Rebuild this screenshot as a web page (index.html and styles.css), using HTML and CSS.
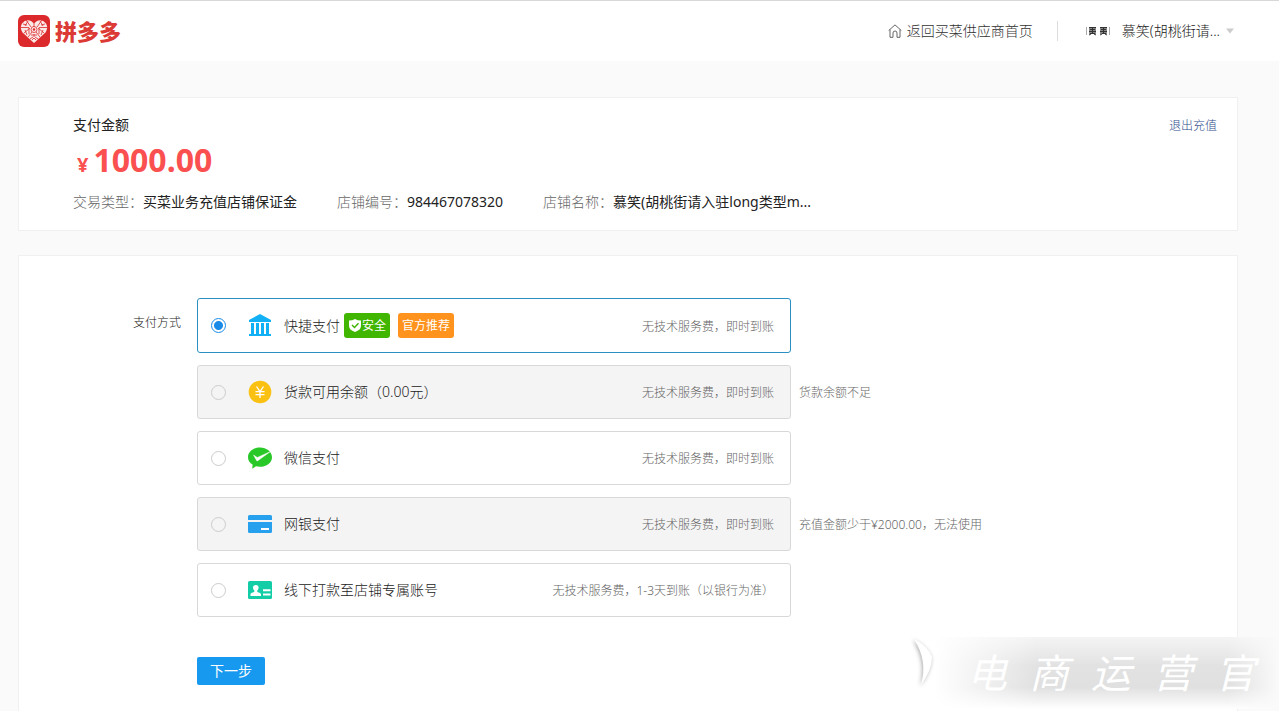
FILE: index.html
```html
<!DOCTYPE html>
<html lang="zh-CN">
<head>
<meta charset="utf-8">
<title>充值</title>
<link rel="stylesheet" href="styles.css">
</head>
<body>
<header class="topbar">
  <a class="brand" href="#">
    <svg class="brand-mark" viewBox="0 0 32 32" aria-hidden="true">
      <rect width="32" height="32" rx="6" fill="#dc2a2c"/>
      <path d="M16 28 4.500 17.500Q1.500 13 4 8.500 8 3.500 13 6L16 8.500 19 6Q24 3.500 28 8.500 30.500 13 27.500 17.500Z" fill="#fbe9e7"/>
      <g stroke="#dc2a2c" fill="none" stroke-width=".8">
        <path d="M3 12.500h8M21 12.500h8M6 18l6-5M26 18l-6-5M8 5l5 7M24 5l-5 7M10 22l4-5M22 22l-4-5M16 8v4M16 19v3M11 13v6M21 13v6"/>
        <path d="M5 9l4 1M27 9l-4 1M7 15l2 5M25 15l-2 5M12 24l3-2M20 24l-3-2M10 6l-3 5M22 6l3 5M13 20h6M14 25l2-2 2 2"/>
        <circle cx="16" cy="14.500" r="3"/>
      </g>
      <circle cx="16" cy="14.500" r="1.200" fill="#dc2a2c"/>
    </svg>
    <span class="brand-name">拼多多</span>
  </a>
  <nav class="topnav">
    <a class="home-link" href="#">
      <svg class="home-icon" viewBox="0 0 14 14" aria-hidden="true"><path d="M.7 6.500 7 .9l6.300 5.600M2 5.500v7.800h3V9a2 2 0 0 1 4 0v4.300h3V5.500" fill="none" stroke="#666"/></svg>
      返回买菜供应商首页
    </a>
    <button class="account" type="button">
      <svg class="avatar" viewBox="0 0 24 10" aria-hidden="true">
        <path d="M.5 1v8M23.500 1v8" stroke="#aaa"/>
        <g fill="#888"><path d="M3 1h7v7H3zM14 1h7v7h-7z"/></g>
        <g stroke="#333" fill="none"><path d="M3 1.500h7M4 3.500h5M3 5.500h7M4 7.500h5M3 9l2-1M8 8l2 1M6.500 1v7M14 1.500h7M15 3.500h5M14 5.500h7M16 7.500h4M14 9l2-1M19 8l2 1M17.500 1v7"/></g>
      </svg>
      <span class="account-name">慕笑(胡桃街请...</span>
      <svg class="caret" viewBox="0 0 8 6" aria-hidden="true"><path d="M0 .5h8L4 5.500z" fill="#ccc"/></svg>
    </button>
  </nav>
</header>

<main class="page">
  <section class="card summary">
    <div class="summary-head">
      <h1 class="summary-title">支付金额</h1>
      <a class="exit-link" href="#">退出充值</a>
    </div>
    <p class="amount"><span class="currency">¥</span>1000.00</p>
    <dl class="facts">
      <div class="fact"><dt>交易类型：</dt><dd>买菜业务充值店铺保证金</dd></div>
      <div class="fact"><dt>店铺编号：</dt><dd>984467078320</dd></div>
      <div class="fact"><dt>店铺名称：</dt><dd>慕笑(胡桃街请入驻long类型m...</dd></div>
    </dl>
  </section>

  <form class="card payment">
    <div class="methods" role="radiogroup" aria-labelledby="method-label">
      <span class="method-label" id="method-label">支付方式</span>
      <div class="method-list">
        <div class="method-row">
          <label class="method selected">
            <input class="radio" type="radio" name="method" checked>
            <svg class="method-icon" viewBox="0 0 24 24" aria-hidden="true"><path d="M12 0 23 6v2H1V6zM3 9h3v11H3zM8 9h3v11H8zM13 9h3v11h-3zM18 9h3v11h-3zM1 20h22v2H1z" fill="#12b0f5"/></svg>
            <span class="method-name">快捷支付</span>
            <span class="badge safe"><svg class="shield" viewBox="0 0 12 13" aria-hidden="true"><path d="M6 0q2.500 1.500 6 1.500v5Q12 11 6 13 0 11 0 6.500v-5Q3.500 1.500 6 0z" fill="#fff"/><path d="m3 6 2.500 2.500L9.500 4.300" fill="none" stroke="#41b600" stroke-width="1.500"/></svg>安全</span>
            <span class="badge advised">官方推荐</span>
            <span class="fee">无技术服务费，即时到账</span>
          </label>
        </div>
        <div class="method-row">
          <label class="method disabled">
            <input class="radio" type="radio" name="method" disabled>
            <svg class="method-icon" viewBox="0 0 24 24" aria-hidden="true"><circle cx="12" cy="12" r="11.300" fill="#fac012"/><path d="m8.500 6.500 3.500 5 3.500-5M7.500 11.700h9M7.500 14.700h9M12 11.500v6.500" fill="none" stroke="#fff" stroke-width="1.300"/></svg>
            <span class="method-name">货款可用余额（0.00元）</span>
            <span class="fee">无技术服务费，即时到账</span>
          </label>
          <span class="reason">货款余额不足</span>
        </div>
        <div class="method-row">
          <label class="method">
            <input class="radio" type="radio" name="method">
            <svg class="method-icon" viewBox="0 0 24 24" aria-hidden="true"><path d="M12 1.500c6.600 0 12 4.300 12 9.700s-5.400 9.600-12 9.600c-1.400 0-2.700-.2-4-.5l-3.800 2.500.4-4.200C1.700 16.800 0 14.200 0 11.200 0 5.800 5.400 1.500 12 1.500z" fill="#28c828"/><path d="m5.500 9 3.800 2.400L22.500 5.500 9.800 14.800q-.8.500-1.300-.3z" fill="#fff" stroke="#fff" stroke-width=".4"/></svg>
            <span class="method-name">微信支付</span>
            <span class="fee">无技术服务费，即时到账</span>
          </label>
        </div>
        <div class="method-row">
          <label class="method disabled">
            <input class="radio" type="radio" name="method" disabled>
            <svg class="method-icon" viewBox="0 0 24 24" aria-hidden="true"><path d="M0 8V4.500Q0 3 1.500 3h21Q24 3 24 4.500V8zM0 10h24v9.500q0 1.500-1.500 1.500h-21Q0 21 0 19.500z" fill="#27a0ee"/><path d="M13 16h8v2h-8z" fill="#fff"/></svg>
            <span class="method-name">网银支付</span>
            <span class="fee">无技术服务费，即时到账</span>
          </label>
          <span class="reason">充值金额少于¥2000.00，无法使用</span>
        </div>
        <div class="method-row">
          <label class="method">
            <input class="radio" type="radio" name="method">
            <svg class="method-icon" viewBox="0 0 24 24" aria-hidden="true"><rect y="3" width="24" height="18" rx="1.500" fill="#12cda6"/><path d="M2.500 18v-2q0-1 3.800-2V12.500Q5 11.500 5 9.500 5 7 7.800 7t2.800 2.500q0 2-1.300 3V14q3.700 1 3.700 2v2zM15 11.300h7.500v2H15zM15 15.500h7.500v2H15z" fill="#fff"/></svg>
            <span class="method-name">线下打款至店铺专属账号</span>
            <span class="fee">无技术服务费，1-3天到账（以银行为准）</span>
          </label>
        </div>
        <button class="next" type="submit">下一步</button>
      </div>
    </div>
  </form>
</main>

<div class="watermark">
  <svg class="crescent" viewBox="0 0 24 54" aria-hidden="true"><path d="M3 3Q17 10 21 21 21 34 10 49 17 25 3 3z" fill="#fff"/></svg>
  <div class="watermark-text"><span>电</span><span>商</span><span>运</span><span>营</span><span>官</span></div>
</div>
</body>
</html>
```
FILE: styles.css
```css
* { box-sizing: border-box; }

body {
  margin: 0;
  min-height: 100vh;
  display: flex;
  flex-direction: column;
  position: relative;
  overflow-x: hidden;
  background: #fafafa;
  color: #222;
  font: 300 14px/20px "Noto Sans", "Noto Sans CJK SC", sans-serif;
}

a { color: inherit; text-decoration: none; }
h1, p, dl, dd { margin: 0; }
button { font: inherit; border: 0; cursor: pointer; }

.topbar {
  display: flex;
  align-items: center;
  justify-content: space-between;
  height: 61px;
  padding: 0 45px 0 18px;
  border-top: 1px solid #d8d8da;
  background: #fff;
}

.brand { display: flex; align-items: center; gap: 5px; color: #dc3a35; }
.brand-mark { width: 32px; height: 32px; }
.brand-name {
  font-size: 22px;
  font-weight: 900;
  line-height: 32px;
}

.topnav { display: flex; align-items: center; color: #333; }
.home-link {
  display: flex;
  align-items: center;
  gap: 5px;
  padding-right: 24px;
  border-right: 1px solid #ddd;
}
.home-icon { width: 14px; height: 14px; }
.account {
  display: flex;
  align-items: center;
  padding: 0 0 0 28px;
  background: none;
  color: #222;
}
.avatar { width: 24px; height: 10px; margin-right: 12px; }
.caret { width: 8px; height: 6px; margin-left: 6px; }

.page {
  flex: 1;
  display: flex;
  flex-direction: column;
  gap: 24px;
  padding: 36px 41px 0 18px;
}
.card { border: 1px solid #f0f0f0; background: #fff; }

.summary { padding: 17px 20px 16px 54px; }
.summary-head { display: flex; justify-content: space-between; }
.summary-title { font-size: 14px; font-weight: 400; line-height: 20px; }
.exit-link { padding-top: 1px; color: #2f4c8c; font-size: 12px; line-height: 20px; height: 20px; }
.amount {
  padding-left: 4px;
  color: #fa5050;
  font-size: 32px;
  font-weight: 700;
  line-height: 50px;
}
.currency { margin-right: 5px; font-size: 20px; }
.facts { display: flex; gap: 40px; line-height: 24px; }
.fact { display: flex; }
.fact dt { color: #666; }
.fact dd { font-weight: 400; }

.payment { flex: 1; padding: 42px 20px 25px 114px; border-bottom: 0; }
.methods { display: flex; gap: 16px; }
.method-label { padding-top: 15px; font-size: 12px; white-space: nowrap; }
.method-list { flex: 1; display: flex; flex-direction: column; gap: 12px; }
.method-row { display: flex; align-items: center; gap: 8px; }
.method {
  display: flex;
  align-items: center;
  flex: 0 1 594px;
  min-height: 54px;
  padding: 0 16px 0 13px;
  border: 1px solid #d8d8d8;
  border-radius: 3px;
}
.method.selected { min-height: 55px; border-color: #2b8fc4; }
.method.disabled { background: #f4f4f4; }

.radio {
  appearance: none;
  flex: none;
  width: 15px;
  height: 15px;
  margin: 0 22px 0 0;
  border: 1px solid #ccc;
  border-radius: 50%;
}
.radio:checked {
  border-color: #1b8be8;
  background: radial-gradient(circle, #1b8be8 0 4px, #fff 5px);
}
.method-icon { flex: none; width: 24px; height: 24px; margin-right: 12px; }
.badge {
  display: flex;
  align-items: center;
  height: 25px;
  padding: 0 4px;
  border-radius: 3px;
  color: #fff;
  font-size: 12px;
  font-weight: 400;
}
.safe { gap: 1px; margin: 0 8px 0 4px; background: #41b600; }
.advised { background: #ff931e; }
.shield { width: 12px; height: 13px; margin-left: 1px; }
.fee,
.reason {
  padding-top: 2px;
  color: #666;
  font-size: 12px;
}
.fee { margin-left: auto; }

.next {
  align-self: flex-start;
  height: 28px;
  margin-top: 28px;
  padding: 0 13px;
  border-radius: 2px;
  background: #1899f0;
  color: #fff;
  font-weight: 400;
}

.watermark {
  position: absolute;
  right: 0;
  bottom: 0;
  display: flex;
  align-items: center;
  width: 368px;
  height: 76px;
  overflow: hidden;
  pointer-events: none;
}
.crescent { width: 24px; height: 54px; margin-bottom: 20px; filter: drop-shadow(-1px 1px 2px #aaa); }
.watermark-text {
  flex: 1;
  display: flex;
  justify-content: space-between;
  align-items: center;
  height: 72px;
  padding: 0 24px 0 32px;
  background:
    linear-gradient(90deg, #fff, transparent 30%, transparent 85%, #fafafa),
    linear-gradient(#f4f4f4, #e2e2e2 40%, #e0e0e0 70%, #fff);
  color: #fff;
  font-size: 40px;
  font-style: italic;
  font-weight: 400;
  line-height: 56px;
}
```
